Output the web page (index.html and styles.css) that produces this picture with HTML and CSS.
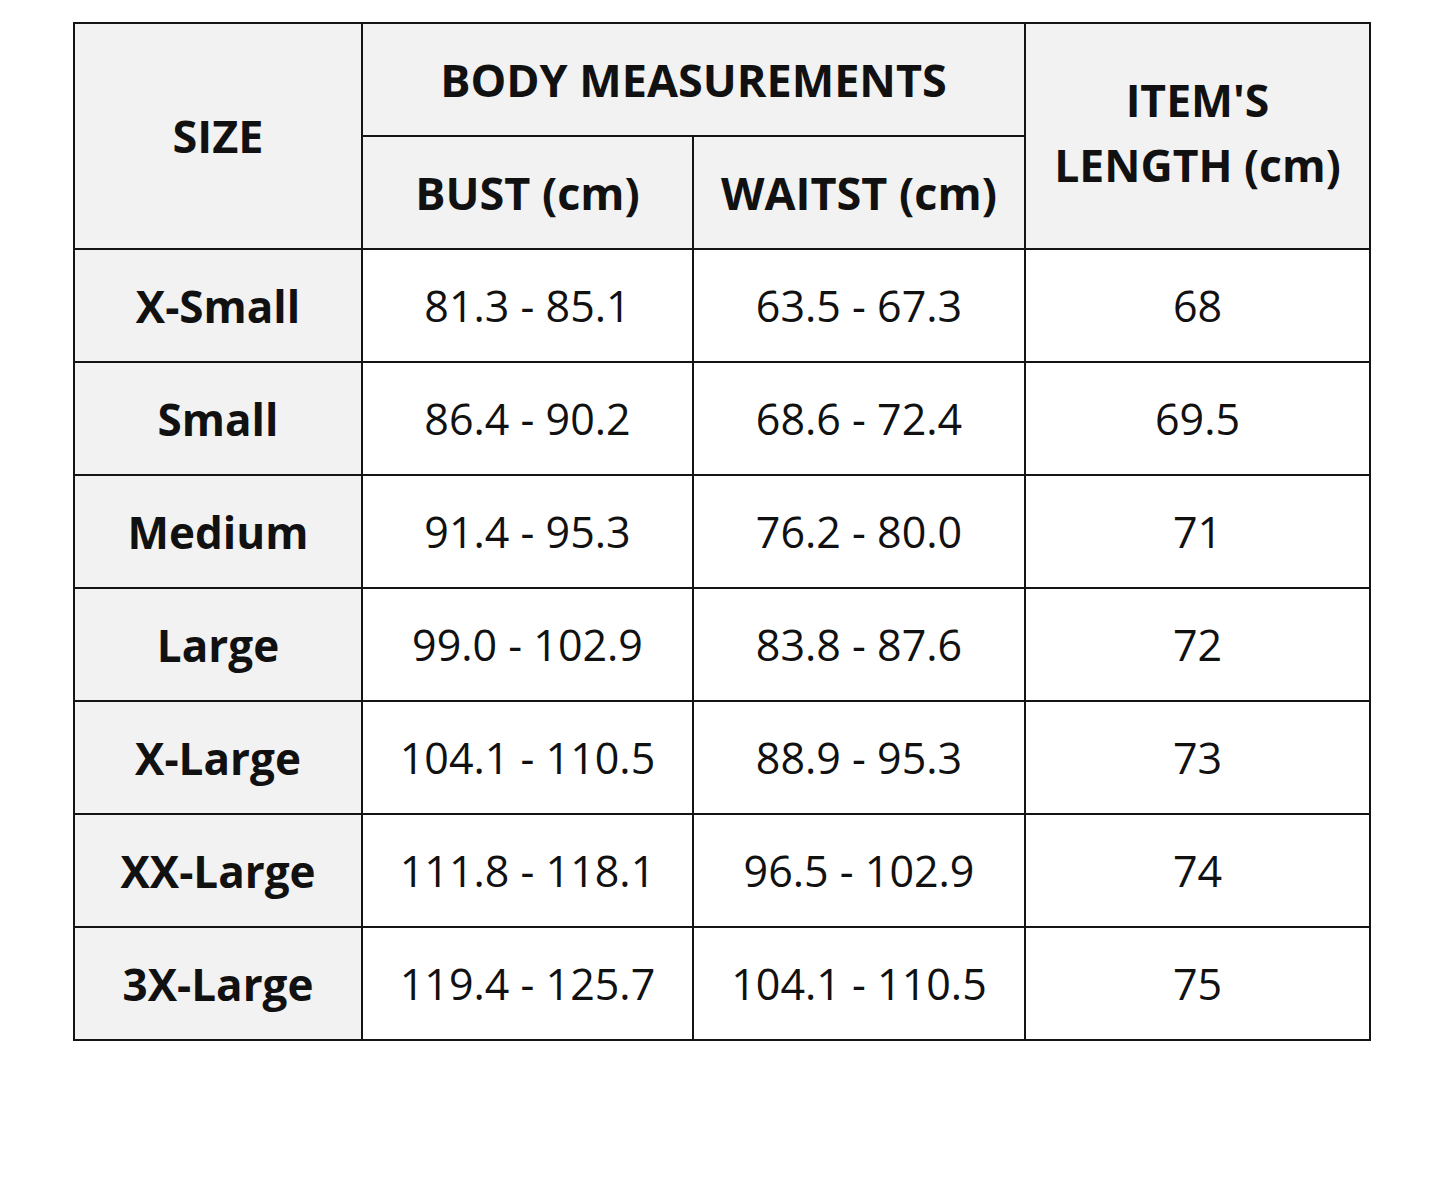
FILE: index.html
```html
<!DOCTYPE html>
<html>
<head>
<meta charset="utf-8">
<link rel="stylesheet" href="styles.css">
</head>
<body>
<table class="chart">
  <colgroup>
    <col class="c1"><col class="c2"><col class="c3"><col class="c4">
  </colgroup>
  <thead>
    <tr class="hrow">
      <th rowspan="2" class="head">SIZE</th>
      <th colspan="2" class="head">BODY MEASUREMENTS</th>
      <th rowspan="2" class="head two">ITEM'S<br>LENGTH (cm)</th>
    </tr>
    <tr class="hrow">
      <th class="head">BUST (cm)</th>
      <th class="head">WAITST (cm)</th>
    </tr>
  </thead>
  <tbody>
    <tr><th class="size">X-Small</th><td>81.3 - 85.1</td><td>63.5 - 67.3</td><td>68</td></tr>
    <tr><th class="size">Small</th><td>86.4 - 90.2</td><td>68.6 - 72.4</td><td>69.5</td></tr>
    <tr><th class="size">Medium</th><td>91.4 - 95.3</td><td>76.2 - 80.0</td><td>71</td></tr>
    <tr><th class="size">Large</th><td>99.0 - 102.9</td><td>83.8 - 87.6</td><td>72</td></tr>
    <tr><th class="size">X-Large</th><td>104.1 - 110.5</td><td>88.9 - 95.3</td><td>73</td></tr>
    <tr><th class="size">XX-Large</th><td>111.8 - 118.1</td><td>96.5 - 102.9</td><td>74</td></tr>
    <tr><th class="size">3X-Large</th><td>119.4 - 125.7</td><td>104.1 - 110.5</td><td>75</td></tr>
  </tbody>
</table>
</body>
</html>
```
FILE: styles.css
```css
html, body {
  margin: 0;
  padding: 0;
  background: #ffffff;
}
body {
  padding: 22px 0 0 73px;
  font-family: "Open Sans", "Noto Sans", sans-serif;
  color: #111;
}
.chart {
  border-collapse: collapse;
  table-layout: fixed;
  width: 1296px;
}
.c1 { width: 288px; }
.c2 { width: 331px; }
.c3 { width: 332px; }
.c4 { width: 345px; }
.chart th, .chart td {
  border: 2px solid #141414;
  text-align: center;
  vertical-align: middle;
  padding: 0;
  height: 111px;
}
.hrow th { height: 111px; }
.head {
  background: #f2f2f2;
  font-weight: 700;
  font-size: 45px;
  line-height: 1.45;
}
.head.two {
  padding-bottom: 6px;
  font-size: 44.5px;
}
.size {
  background: #f2f2f2;
  font-weight: 700;
  font-size: 44px;
}
.chart td {
  background: #ffffff;
  font-weight: 400;
  font-size: 43px;
}
```
